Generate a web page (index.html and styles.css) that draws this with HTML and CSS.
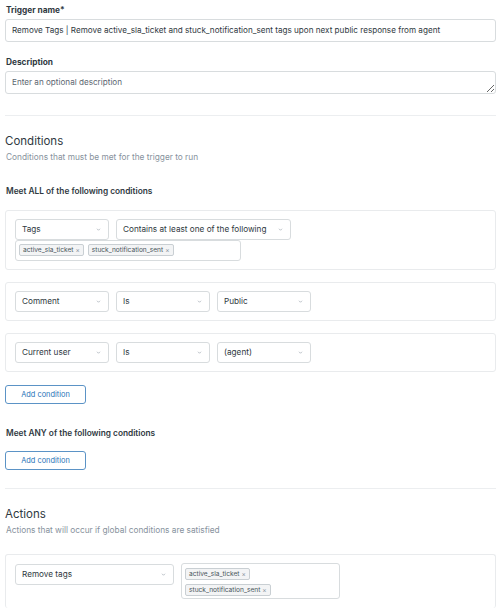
FILE: index.html
```html
<!DOCTYPE html>
<html lang="en">
<head>
<meta charset="utf-8">
<title>Trigger</title>
<link rel="stylesheet" href="styles.css">
</head>
<body>
<div class="page">
  <div class="field">
    <label class="label">Trigger name*</label>
    <div class="input">Remove Tags | Remove active_sla_ticket and stuck_notification_sent tags upon next public response from agent</div>
  </div>
  <div class="field field-desc">
    <label class="label">Description</label>
    <textarea class="textarea" placeholder="Enter an optional description"></textarea>
  </div>

  <hr class="divider">

  <h2 class="section-title">Conditions</h2>
  <p class="section-sub">Conditions that must be met for the trigger to run</p>

  <h3 class="group-title">Meet ALL of the following conditions</h3>

  <div class="cond-box">
    <div class="row">
      <div class="select">Tags<svg class="chev" viewBox="0 0 6 4"><path d="M1 1l2 2 2-2"/></svg></div>
      <div class="select select-wide">Contains at least one of the following<svg class="chev" viewBox="0 0 6 4"><path d="M1 1l2 2 2-2"/></svg></div>
    </div>
    <div class="tagfield tagfield-cond">
      <span class="tag">active_sla_ticket <span class="x">×</span></span>
      <span class="tag">stuck_notification_sent <span class="x">×</span></span>
      <span class="tag-input"></span>
    </div>
  </div>

  <div class="cond-box">
    <div class="row">
      <div class="select">Comment<svg class="chev" viewBox="0 0 6 4"><path d="M1 1l2 2 2-2"/></svg></div>
      <div class="select">Is<svg class="chev" viewBox="0 0 6 4"><path d="M1 1l2 2 2-2"/></svg></div>
      <div class="select">Public<svg class="chev" viewBox="0 0 6 4"><path d="M1 1l2 2 2-2"/></svg></div>
    </div>
  </div>

  <div class="cond-box">
    <div class="row">
      <div class="select">Current user<svg class="chev" viewBox="0 0 6 4"><path d="M1 1l2 2 2-2"/></svg></div>
      <div class="select">Is<svg class="chev" viewBox="0 0 6 4"><path d="M1 1l2 2 2-2"/></svg></div>
      <div class="select">(agent)<svg class="chev" viewBox="0 0 6 4"><path d="M1 1l2 2 2-2"/></svg></div>
    </div>
  </div>

  <button class="btn">Add condition</button>

  <h3 class="group-title group-any">Meet ANY of the following conditions</h3>
  <button class="btn btn-any">Add condition</button>

  <hr class="divider divider-actions">

  <h2 class="section-title">Actions</h2>
  <p class="section-sub">Actions that will occur if global conditions are satisfied</p>

  <div class="cond-box action-box">
    <div class="row row-action">
      <div class="select select-action">Remove tags<svg class="chev" viewBox="0 0 6 4"><path d="M1 1l2 2 2-2"/></svg></div>
      <div class="tagfield tagfield-action">
        <span class="tag">active_sla_ticket <span class="x">×</span></span>
        <span class="tag">stuck_notification_sent <span class="x">×</span></span>
        <span class="tag-input"></span>
      </div>
    </div>
  </div>
</div>
</body>
</html>
```

FILE: styles.css
```css
* { box-sizing: border-box; }

html, body {
  margin: 0;
  padding: 0;
  background: #ffffff;
}

body {
  font-family: Inter, "Liberation Sans", Arial, sans-serif;
  color: #2f3941;
  font-size: 8.2px;
  overflow: hidden;
}

.page {
  width: 491px;
  margin-left: 5px;
  padding-top: 5px;
}

.field {
  display: flex;
  flex-direction: column;
}

.field-desc {
  margin-top: 15px;
}

.label {
  font-weight: 700;
  font-size: 8.3px;
  line-height: 11px;
  margin-bottom: 3px;
  padding-left: 1px;
}

.input {
  height: 23px;
  border: 1px solid #d8dcde;
  border-radius: 3px;
  padding: 0 6px;
  line-height: 21px;
  font-size: 8.15px;
  white-space: nowrap;
  overflow: hidden;
}

.textarea {
  display: block;
  width: 100%;
  height: 23px;
  border: 1px solid #d8dcde;
  border-radius: 3px;
  padding: 5px 6px 0;
  font-family: Inter, "Liberation Sans", Arial, sans-serif;
  font-size: 8.15px;
  line-height: 11px;
  color: #2f3941;
  resize: vertical;
  margin: 0;
  outline: none;
}

.textarea::placeholder {
  color: #5c6670;
}

.divider {
  border: 0;
  border-top: 1px solid #eceef0;
  margin: 21px 0 0;
  height: 0;
}

.section-title {
  margin: 17px 0 0;
  font-size: 11.5px;
  line-height: 16px;
  font-weight: normal;
  color: #2f3941;
}

.section-sub {
  margin: 3px 0 0;
  font-size: 8.3px;
  line-height: 11px;
  color: #87929d;
  padding-left: 1px;
}

.group-title {
  margin: 23px 0 0;
  font-size: 8.3px;
  line-height: 11px;
  font-weight: 600;
  padding-left: 1px;
}

.cond-box {
  margin-top: 13px;
  border: 1px solid #e9ebed;
  border-radius: 3px;
  padding: 8px 9px;
}

.cond-box + .cond-box {
  margin-top: 12px;
}

.row {
  display: flex;
  gap: 7px;
}

.select {
  position: relative;
  width: 94px;
  height: 21px;
  border: 1px solid #d8dcde;
  border-radius: 3px;
  padding: 0 6px;
  line-height: 19px;
  font-size: 8.2px;
  color: #2f3941;
  white-space: nowrap;
}

.select-wide {
  width: 175px;
}

.chev {
  position: absolute;
  right: 7px;
  top: 8px;
  width: 5px;
  height: 3px;
  fill: none;
  stroke: #9aa3ab;
  stroke-width: 0.9;
}

.tagfield {
  display: flex;
  flex-wrap: wrap;
  align-items: flex-start;
  gap: 4px 4px;
  border: 1px solid #d8dcde;
  border-radius: 3px;
  padding: 3px 3px;
}

.tagfield-cond {
  width: 226px;
  height: 21px;
}

.tag {
  display: inline-flex;
  align-items: center;
  height: 12px;
  padding: 0 3px;
  border: 1px solid #c9cfd3;
  border-radius: 2px;
  background: #f3f4f5;
  font-size: 6.6px;
  line-height: 10px;
  color: #49545c;
  white-space: nowrap;
}

.x {
  margin-left: 2px;
  color: #87929d;
  font-size: 6.6px;
}

.tag-input {
  flex: 1;
  min-width: 24px;
  height: 12px;
}

.btn {
  display: block;
  margin-top: 13px;
  width: 81px;
  height: 19px;
  border: 1px solid #5b93c6;
  border-radius: 3px;
  background: #ffffff;
  color: #1f73b7;
  font-family: Inter, "Liberation Sans", Arial, sans-serif;
  font-size: 7.4px;
  padding: 0;
}

.group-any {
  margin-top: 24px;
}

.btn-any {
  margin-top: 12px;
}

.divider-actions {
  margin-top: 18px;
}

.action-box {
  margin-top: 18px;
  padding: 9px 9px 9px;
  border-bottom: none;
}

.row-action {
  align-items: flex-start;
}

.select-action {
  width: 159px;
}

.tagfield-action {
  width: 159px;
  height: 36px;
  margin-top: -1px;
  padding: 4px 3px;
}
```
